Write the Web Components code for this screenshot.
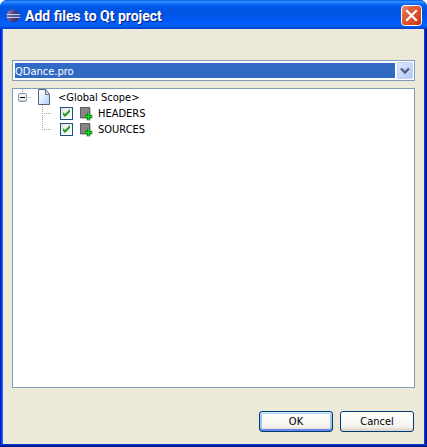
<!DOCTYPE html>
<html lang="en">
<head>
<meta charset="utf-8">
<title>Add files to Qt project</title>
<style>
  html { background: #fff; }
  body {
    margin: 0;
    font: 11px/18px "DejaVu Sans Condensed", "DejaVu Sans", sans-serif;
    color: #000;
  }
</style>
</head>
<body>
<xp-window>
  <span slot="title">Add files to Qt project</span>
  <xp-combo label="Project file" options="QDance.pro"></xp-combo>
  <scope-tree>
    <span slot="root">&lt;Global Scope&gt;</span>
    <scope-item checked>HEADERS</scope-item>
    <scope-item checked>SOURCES</scope-item>
  </scope-tree>
  <xp-button slot="actions" default>OK</xp-button>
  <xp-button slot="actions">Cancel</xp-button>
</xp-window>

<script>
(function () {
  'use strict';

  function mount(el, html) {
    if (el.shadowRoot) return;
    el.attachShadow({ mode: 'open' }).innerHTML = html;
  }

  // Window frame: gradient title bar, blue border, content area, button row
  class XpWindow extends HTMLElement {
    connectedCallback() {
      mount(this, `
        <style>
          :host { display: block; }
          .frame {
            box-sizing: border-box; min-height: 100vh;
            display: flex; flex-direction: column;
            border-radius: 7px 7px 0 0; overflow: hidden;
            background: linear-gradient(90deg, #0019cf 0 1px, #0a3de8 1px 2px, #166aee 2px 3px, #0038e0 3px calc(100% - 3px), #0441d8 calc(100% - 3px) calc(100% - 2px), #001ea0 calc(100% - 2px) calc(100% - 1px), #00138c calc(100% - 1px));
          }
          header {
            display: flex; align-items: center; gap: 5px;
            box-sizing: border-box; height: 29px; padding: 2px 5px 0 6px;
            background: linear-gradient(#0058e6 0, #3a93ff 2px, #0a6af8 4px, #0057e5 7px, #0054e3 14px, #005bf5 20px, #0262fd 25px, #0055e8 27px, #003dd0 29px);
          }
          h1 {
            flex: 1; margin: 0; color: #fff;
            font: bold 14px/20px Roboto, "Open Sans", sans-serif;
            text-shadow: 1px 1px #0a1883;
          }
          header svg { display: block; }
          button { padding: 0; border: 0; background: none; width: 21px; height: 21px; }
          main {
            flex: 1; display: flex; flex-direction: column; gap: 7px;
            margin: 0 3px; padding: 31px 9px 12px; background: #ece9d8;
          }
          footer {
            display: flex; justify-content: flex-end; gap: 7px;
            margin: 0 3px; padding: 11px 10px 12px; background: #ece9d8;
          }
          .edge { height: 3px; background: linear-gradient(#0441d8 1px, #001ea0 1px 2px, #00138c 2px); }
        </style>
        <div class="frame">
          <header>
            <svg width="14" height="14" viewBox="0 0 14 14" aria-hidden="true">
              <defs>
                <linearGradient id="ball" x1="0" x2="1" y2="0.4">
                  <stop offset="0" stop-color="#e0a8b4"/><stop offset="0.25" stop-color="#8b6f9f"/>
                  <stop offset="0.6" stop-color="#494487"/><stop offset="1" stop-color="#302e70"/>
                </linearGradient>
              </defs>
              <circle cx="7" cy="7" r="6.5" fill="url(#ball)"/>
              <path d="M1 5.5h13M1 8.5h13" stroke="#c5cbe8"/>
              <path d="M1 7h13" stroke="#6a6ca8"/>
            </svg>
            <h1><slot name="title"></slot></h1>
            <button type="button" aria-label="Close">
              <svg width="21" height="21" viewBox="0 0 21 21" aria-hidden="true">
                <defs>
                  <linearGradient id="red" x2="1" y2="1">
                    <stop offset="0" stop-color="#ee9a80"/><stop offset="0.3" stop-color="#e0603c"/>
                    <stop offset="0.75" stop-color="#d94620"/><stop offset="1" stop-color="#b02c0c"/>
                  </linearGradient>
                </defs>
                <rect x="0.5" y="0.5" width="20" height="20" rx="3" fill="url(#red)" stroke="#fff"/>
                <path d="M6 6l9 9M15 6l-9 9" stroke="#fff" stroke-width="2.2" stroke-linecap="square"/>
              </svg>
            </button>
          </header>
          <main><slot></slot></main>
          <footer><slot name="actions"></slot></footer>
          <div class="edge"></div>
        </div>`);
    }
  }

  // Drop-down list, value highlighted as when focused
  class XpCombo extends HTMLElement {
    connectedCallback() {
      mount(this, `
        <style>
          :host { display: block; border: 1px solid #7f9db9; background: #fff; }
          label { display: grid; grid-template-columns: 1fr 16px; padding: 1px; height: 17px; }
          select {
            grid-area: 1 / 1 / 2 / 3; appearance: none; box-sizing: border-box;
            width: 100%; height: 17px; margin: 0; border: 0; border-radius: 0; outline: 0;
            padding: 1px 18px 1px 1px; font: inherit; line-height: 17px; color: #fff;
            background: #316ac5 content-box;
          }
          svg { grid-area: 1 / 2; display: block; pointer-events: none; z-index: 1; }
        </style>
        <label>
          <select></select>
          <svg width="16" height="17" viewBox="0 0 16 17" aria-hidden="true">
            <defs>
              <linearGradient id="face" x2="1" y2="1">
                <stop offset="0" stop-color="#e1eafe"/><stop offset="0.5" stop-color="#c8d7fb"/>
                <stop offset="1" stop-color="#b0c6f2"/>
              </linearGradient>
            </defs>
            <rect x="0.5" y="0.5" width="15" height="16" rx="1" fill="url(#face)" stroke="#c3d3fd"/>
            <path d="M4 6.5l4 4 4-4" fill="none" stroke="#4d6185" stroke-width="2.4"/>
          </svg>
        </label>`);
      var select = this.shadowRoot.querySelector('select');
      select.setAttribute('aria-label', this.getAttribute('label'));
      this.getAttribute('options').split(',').forEach(function (name) {
        select.add(new Option(name));
      });
    }
  }

  // Root row with expander; child rows come through the default slot
  class ScopeTree extends HTMLElement {
    connectedCallback() {
      mount(this, `
        <style>
          :host { display: block; flex: 1; border: 1px solid #7f9db9; background: #fff; }
          .root { display: flex; height: 16px; padding-left: 5px; }
          .root svg { display: block; flex: none; }
          button { padding: 0; border: 0; background: none; width: 20px; height: 16px; }
          .name { padding-left: 7px; }
          .children { padding-left: 29px; }
        </style>
        <div class="root">
          <button type="button" aria-label="Collapse" aria-expanded="true">
            <svg width="14" height="16" viewBox="0 0 14 16" aria-hidden="true">
              <path d="M4.5 0v4" stroke="#aca899" stroke-dasharray="1 1"/>
              <path d="M10 8.5h4" stroke="#aca899" stroke-dasharray="1 1"/>
              <rect x="0.5" y="4.5" width="8" height="8" rx="1" fill="#f3f1e9" stroke="#7b98b8"/>
              <path d="M1 11.5h7" stroke="#cfc9b8"/>
              <path d="M2 8.5h5" stroke="#000"/>
            </svg>
          </button>
          <svg width="13" height="16" viewBox="0 0 13 16" aria-hidden="true">
            <defs>
              <linearGradient id="page" x2="1" y2="1">
                <stop offset="0" stop-color="#fff"/><stop offset="0.4" stop-color="#e8f0ff"/>
                <stop offset="1" stop-color="#a9cdfb"/>
              </linearGradient>
            </defs>
            <path d="M0.5 0.5h7l4 5v10h-11z" fill="url(#page)" stroke="#56657f"/>
            <path d="M7.5 0.5v5h4z" fill="#e6eefb" stroke="#65738c"/>
          </svg>
          <span class="name"><slot name="root"></slot></span>
        </div>
        <div class="children"><slot></slot></div>`);
      this.querySelector('scope-item:last-of-type').toggleAttribute('last', true);
    }
  }

  // Checkable child row with its tree branch
  class ScopeItem extends HTMLElement {
    connectedCallback() {
      mount(this, `
        <style>
          :host { display: block; height: 16px; }
          label { display: flex; height: 16px; }
          svg { display: block; flex: none; }
          :host([last]) .down { display: none; }
          input {
            appearance: none; box-sizing: border-box; flex: none;
            width: 13px; height: 13px; margin: 2px 6px 0 4px; border: 1px solid #1d5281;
            background: linear-gradient(135deg, #e4e4de, #fff);
          }
          input:checked {
            background: url("data:image/svg+xml,%3Csvg xmlns='http://www.w3.org/2000/svg' width='11' height='11'%3E%3Cpath d='M2 4v3l2 2 5-5V1L4 6z' fill='%2321a121'/%3E%3C/svg%3E"),
              linear-gradient(135deg, #e4e4de, #fff);
          }
          .name { padding-left: 5px; }
        </style>
        <label>
          <svg width="14" height="16" viewBox="0 0 14 16" aria-hidden="true">
            <path d="M0.5 0v9M0 8.5h10" stroke="#aca899" stroke-dasharray="1 1"/>
            <path class="down" d="M0.5 10v6" stroke="#aca899" stroke-dasharray="1 1"/>
          </svg>
          <input type="checkbox">
          <svg width="14" height="16" viewBox="0 0 14 16" aria-hidden="true">
            <rect x="1" y="3" width="11" height="11" fill="#c8c8c8"/>
            <rect x="1.5" y="2.5" width="9" height="10" fill="#868686" stroke="#606060"/>
            <path d="M9.5 6v10M5 11.5h9" stroke="#777" stroke-opacity="0.4" stroke-width="4"/>
            <path d="M9.5 8v7M6 11.5h7" stroke="#078a12" stroke-width="3"/>
            <path d="M9.5 8v7M6 11.5h7" stroke="#18e02a"/>
          </svg>
          <span class="name"><slot></slot></span>
        </label>`);
      this.shadowRoot.querySelector('input').checked = this.hasAttribute('checked');
    }
  }

  class XpButton extends HTMLElement {
    connectedCallback() {
      mount(this, `
        <style>
          :host { display: block; }
          button {
            display: block; box-sizing: border-box; min-width: 74px; height: 21px; padding: 0 8px;
            font: inherit; line-height: 19px; color: #000;
            border: 1px solid #003c74; border-radius: 3px;
            background: linear-gradient(#fff, #f4f3ee 75%, #d6d0c5);
          }
          :host([default]) button {
            box-shadow: inset 0 1px #cee7ff, inset 0 -2px #6982ee, inset 2px 0 #a6c3f5, inset -2px 0 #a6c3f5, inset 0 2px #bcd4f6;
          }
        </style>
        <button type="button"><slot></slot></button>`);
    }
  }

  customElements.define('xp-window', XpWindow);
  customElements.define('xp-combo', XpCombo);
  customElements.define('scope-item', ScopeItem);
  customElements.define('scope-tree', ScopeTree);
  customElements.define('xp-button', XpButton);
})();
</script>
</body>
</html>
